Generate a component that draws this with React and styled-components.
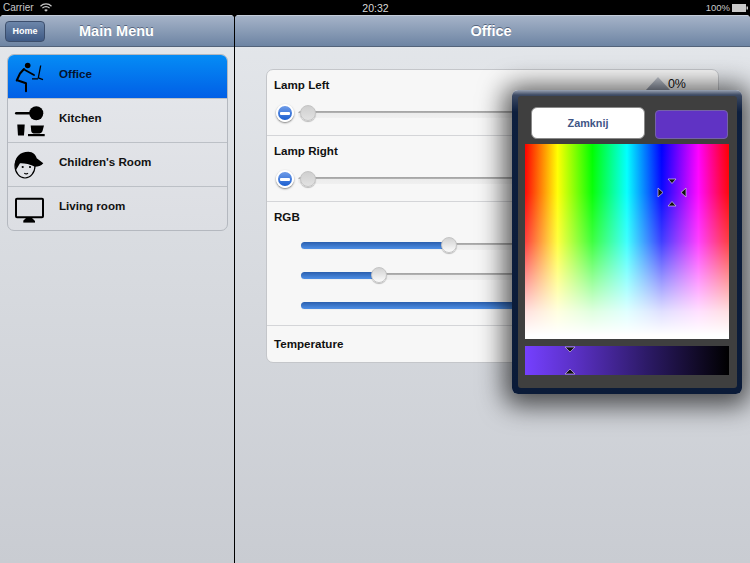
import styled, { createGlobalStyle } from "styled-components";

const Global = createGlobalStyle`
  html, body {
    margin: 0;
    padding: 0;
    background: #000;
  }
  * {
    box-sizing: border-box;
  }
`;

const Page = styled.div`
  width: 750px;
  height: 563px;
  position: relative;
  overflow: hidden;
  display: flex;
  flex-direction: column;
  background: #000;
  font-family: "Liberation Sans", Arial, sans-serif;
`;

const StatusBar = styled.div`
  height: 15px;
  flex: none;
  display: grid;
  grid-template-columns: 1fr auto 1fr;
  align-items: center;
  padding: 0 2px 0 3px;
  color: #c9c9c9;
  font-size: 10px;
`;

const StatusLeft = styled.div`
  display: flex;
  align-items: center;
  gap: 6px;
`;

const StatusRight = styled.div`
  display: flex;
  align-items: center;
  justify-content: flex-end;
  gap: 2px;
  font-size: 9.5px;
`;

const Clock = styled.div`
  color: #d8d8d8;
  font-size: 10.5px;
`;

const Split = styled.div`
  flex: 1;
  display: flex;
  gap: 1px;
  min-height: 0;
`;

const Side = styled.div`
  width: 234px;
  flex: none;
  display: flex;
  flex-direction: column;
  border-radius: 4px 4px 0 0;
  overflow: hidden;
  background: linear-gradient(to bottom, #e4e7eb, #c9ccd2);
`;

const Main = styled.div`
  flex: 1;
  display: flex;
  flex-direction: column;
  border-radius: 4px 4px 0 0;
  overflow: hidden;
  background: linear-gradient(to bottom, #e4e7eb, #c9ccd2);
`;

const NavBar = styled.div`
  height: 32px;
  flex: none;
  position: relative;
  display: flex;
  align-items: center;
  justify-content: ${(p) => (p.$center ? "center" : "flex-start")};
  padding-left: 5px;
  padding-right: ${(p) => (p.$center ? "8px" : "0")};
  background: linear-gradient(to bottom, #a5b3c8, #6d84a3);
  border-top: 1px solid #c3ccda;
  border-bottom: 1px solid #53637a;
`;

const NavTitle = styled.div`
  color: #fff;
  font-size: 14.5px;
  font-weight: bold;
  text-shadow: 0 -1px 0 rgba(60, 75, 100, 0.7);
`;

const SideTitle = styled(NavTitle)`
  margin-left: 34px;
`;

const HomeButton = styled.div`
  width: 40px;
  height: 21px;
  display: flex;
  align-items: center;
  justify-content: center;
  border-radius: 4px;
  border: 1px solid #3c4e6c;
  background: linear-gradient(to bottom, #6c86aa, #3f5a85);
  color: #fff;
  font-size: 9px;
  font-weight: bold;
`;

const Menu = styled.div`
  margin: 7px 6px 0 7px;
  border: 1px solid #b4b8bf;
  border-radius: 7px;
  overflow: hidden;
  background: linear-gradient(to bottom, #e6e8ec, #dcdee3);
`;

const MenuRow = styled.div`
  height: ${(p) => (p.$first ? "43px" : "44px")};
  display: flex;
  align-items: center;
  background: ${(p) =>
    p.$active ? "linear-gradient(to bottom, #058cf5, #015fe6)" : "transparent"};
  border-top: ${(p) => (p.$first ? "none" : "1px solid #bcc0c6")};
  padding-left: 6px;
`;

const MenuIcon = styled.svg`
  width: 32px;
  height: 36px;
  flex: none;
`;

const MenuLabel = styled.div`
  margin: -7px 0 0 13px;
  font-size: 11.6px;
  font-weight: bold;
  color: ${(p) => (p.$active ? "#04122e" : "#111")};
`;

const Content = styled.div`
  padding: 22px 31px 0;
`;

const Card = styled.div`
  border: 1px solid #c4c6ca;
  border-radius: 7px;
  background: #f7f7f7;
  overflow: hidden;
`;

const CardRow = styled.div`
  height: ${(p) => p.$height}px;
  padding: ${(p) => p.$top || 8}px 7px 0;
  position: relative;
  border-top: ${(p) => (p.$first ? "none" : "1px solid #d4d5d8")};
`;

const RowHead = styled.div`
  display: flex;
  justify-content: space-between;
  align-items: center;
`;

const RowLabel = styled.div`
  font-size: 11.6px;
  font-weight: bold;
  line-height: 13px;
  color: #111;
`;

const RowValue = styled.div`
  font-size: 12.5px;
  line-height: 13px;
  color: #111;
  margin-right: 25px;
`;

const LampLine = styled.div`
  margin-top: 13px;
  display: flex;
  align-items: center;
  gap: 4px;
  padding-left: 2px;
`;

const MinusButton = styled.div`
  width: 18px;
  height: 18px;
  flex: none;
  border-radius: 50%;
  display: flex;
  align-items: center;
  justify-content: center;
  border: 2px solid #fff;
  background: linear-gradient(to bottom, #6f9ce8, #1c5fd0);
  box-shadow: 0 1px 2px rgba(0, 0, 0, 0.5);
  &::after {
    content: "";
    width: 10px;
    height: 3px;
    background: #fff;
    border-radius: 1px;
  }
`;

const Slider = styled.div`
  position: relative;
  height: 16px;
  flex: 1;
  display: flex;
  align-items: center;
`;

const RgbSlider = styled(Slider)`
  flex: none;
`;

const Track = styled.div`
  flex: 1;
  height: 7px;
  margin-top: 2px;
  border-radius: 3px;
  background: linear-gradient(to bottom, #a2a2a2 0, #b4b4b4 28%, #ececec 32%, #f0f0f0 100%);
`;

const Fill = styled.div`
  position: absolute;
  left: 0;
  top: 5px;
  height: 7px;
  border-radius: 4px;
  background: linear-gradient(to bottom, #2a5fae, #4e8fe6);
`;

const Thumb = styled.div`
  position: absolute;
  top: 0;
  width: 16px;
  height: 16px;
  margin-left: -8px;
  border-radius: 50%;
  border: 1px solid #c4c4c4;
  background: ${(p) =>
    p.$off
      ? "linear-gradient(to bottom, #cfcfcf, #e2e2e2)"
      : "linear-gradient(to bottom, #d2d2d2, #fbfbfb)"};
  box-shadow: 0 1px 1px rgba(0, 0, 0, 0.25);
`;

const RgbSliders = styled.div`
  margin-top: 14px;
  padding-left: 27px;
  display: flex;
  flex-direction: column;
  gap: 14px;
`;

const Arrow = styled.div`
  position: absolute;
  left: 645px;
  top: 77px;
  width: 26px;
  height: 14px;
  clip-path: polygon(50% 0, 100% 100%, 0 100%);
  background: linear-gradient(to bottom, #c6cad2, #8e96a6);
`;

const Popover = styled.div`
  position: absolute;
  left: 512px;
  top: 90px;
  width: 230px;
  height: 304px;
  padding: 6px 5px 5px 6px;
  border-radius: 6px;
  background: linear-gradient(to bottom, #9aa3b3 0, #3d4a63 5px, #0d1f3e 22px, #0b1b38 100%);
  box-shadow: 0 4px 26px 8px rgba(0, 0, 0, 0.65);
`;

const PopoverInner = styled.div`
  height: 292px;
  border-radius: 3px;
  background: #3f3f3f;
  padding: 11px 8px 0 7px;
  display: flex;
  flex-direction: column;
`;

const PickerTop = styled.div`
  display: flex;
  align-items: flex-end;
  justify-content: space-between;
  height: 32px;
  padding: 0 1px 0 6px;
`;

const CloseButton = styled.div`
  width: 114px;
  height: 32px;
  display: flex;
  align-items: center;
  justify-content: center;
  border-radius: 6px;
  background: #fff;
  border: 1px solid #8a8a8a;
  color: #3f5585;
  font-size: 10.8px;
  font-weight: bold;
`;

const Swatch = styled.div`
  width: 73px;
  height: 29px;
  border-radius: 4px;
  background: #6033c4;
  border: 1px solid #7562a8;
`;

const Spectrum = styled.div`
  position: relative;
  margin-top: 5px;
  height: 195px;
  background: linear-gradient(
      to bottom,
      rgba(255, 255, 255, 0) 0%,
      rgba(255, 255, 255, 0.04) 25%,
      rgba(255, 255, 255, 0.25) 50%,
      rgba(255, 255, 255, 0.6) 70%,
      rgba(255, 255, 255, 0.88) 86%,
      rgba(255, 255, 255, 1) 98%
    ),
    linear-gradient(
      to right,
      #f00 0%,
      #ff0 16%,
      #0f0 33%,
      #0ff 50%,
      #00f 67%,
      #f0f 85%,
      #f00 100%
    );
`;

const Shade = styled.div`
  position: relative;
  margin-top: 7px;
  height: 29px;
  background: linear-gradient(to right, #7540ff 0%, #5a30c4 25%, #2c1a66 60%, #000 100%);
`;

const Marker = styled.svg`
  position: absolute;
  overflow: visible;
`;

const CrossMarker = styled(Marker)`
  left: 133px;
  top: 35px;
  width: 28px;
  height: 27px;
`;

const ShadeMarker = styled(Marker)`
  left: 38px;
  top: 0;
  width: 14px;
  height: 29px;
`;

function Wifi() {
  return (
    <svg width="12" height="9" viewBox="0 0 12 9">
      <path d="M0.5 3.2C3.6 0.2 8.4 0.2 11.5 3.2" fill="none" stroke="#c9c9c9" strokeWidth="1.3" />
      <path d="M2.4 5.1C4.4 3.2 7.6 3.2 9.6 5.1" fill="none" stroke="#c9c9c9" strokeWidth="1.3" />
      <path d="M4.2 6.9C5.2 6 6.8 6 7.8 6.9L6 8.8Z" fill="#c9c9c9" />
    </svg>
  );
}

function Battery() {
  return (
    <svg width="16" height="8" viewBox="0 0 16 8">
      <rect x="0.5" y="0.5" width="13" height="7" fill="#c9c9c9" stroke="#c9c9c9" />
      <rect x="14.5" y="2.5" width="1.5" height="3" fill="#c9c9c9" />
    </svg>
  );
}

function OfficeIcon() {
  return (
    <MenuIcon viewBox="0 0 32 36">
      <circle cx="13.7" cy="6.5" r="2.8" fill="#000" />
      <path d="M10 10L6 14.5L2.7 21.5" fill="none" stroke="#000" strokeWidth="2" strokeLinecap="round" strokeLinejoin="round" />
      <path d="M11 11L20 16" fill="none" stroke="#000" strokeWidth="1.8" strokeLinecap="round" />
      <path d="M4 21.5L12 24.2L12 32.2" fill="none" stroke="#000" strokeWidth="2" strokeLinecap="round" strokeLinejoin="round" />
      <path d="M26.7 6.5L24.3 18.8L29 20.6" fill="none" stroke="#000" strokeWidth="1.3" strokeLinejoin="round" />
      <path d="M18 19.8H24" stroke="#000" strokeWidth="1.2" />
    </MenuIcon>
  );
}

function KitchenIcon() {
  return (
    <MenuIcon viewBox="0 0 32 36">
      <circle cx="22.3" cy="10.2" r="7" fill="#000" />
      <rect x="1" y="9" width="16" height="2.4" rx="1.2" fill="#000" />
      <path d="M3.3 21.5H10.7L10 32.5H4Z" fill="#000" />
      <path d="M16.7 22.5H30L28.5 28C28 30 26 30.5 24 30.5H21C19 30.5 17.5 30 17.2 28Z" fill="#000" />
      <rect x="14" y="31" width="16.7" height="2.2" fill="#000" />
    </MenuIcon>
  );
}

function ChildIcon() {
  return (
    <MenuIcon viewBox="0 0 32 36">
      <ellipse cx="11" cy="19" rx="10" ry="12" fill="none" stroke="#000" strokeWidth="1.2" />
      <path d="M1 18C1 10 6 4.7 14.3 4.7C19 4.7 22 8 22.7 11.3L29.3 16.3C27 19 24 19.7 21 19.7C16 17 9 16 6 16.3L2 23Z" fill="#000" />
      <circle cx="8.7" cy="20" r="1.1" fill="#000" />
      <circle cx="16" cy="20" r="1.1" fill="#000" />
      <path d="M10.3 26.2C11.5 27 13 27 14 26.2" fill="none" stroke="#000" strokeWidth="1.2" />
    </MenuIcon>
  );
}

function TvIcon() {
  return (
    <MenuIcon viewBox="0 0 32 36">
      <rect x="2" y="7.7" width="27" height="18.6" rx="1" fill="none" stroke="#000" strokeWidth="2" />
      <path d="M12 27H18L21 30H9Z" fill="#000" />
      <rect x="9.3" y="30" width="11.7" height="1.6" fill="#000" />
    </MenuIcon>
  );
}

const menuItems = [
  { label: "Office", Icon: OfficeIcon, active: true },
  { label: "Kitchen", Icon: KitchenIcon },
  { label: "Children's Room", Icon: ChildIcon },
  { label: "Living room", Icon: TvIcon },
];

function App() {
  return (
    <Page>
      <Global />
      <StatusBar>
        <StatusLeft>
          Carrier
          <Wifi />
        </StatusLeft>
        <Clock>20:32</Clock>
        <StatusRight>
          100%
          <Battery />
        </StatusRight>
      </StatusBar>
      <Split>
        <Side>
          <NavBar>
            <HomeButton>Home</HomeButton>
            <SideTitle>Main Menu</SideTitle>
          </NavBar>
          <Menu>
            {menuItems.map(({ label, Icon, active }, i) => (
              <MenuRow key={label} $active={active} $first={i === 0}>
                <Icon />
                <MenuLabel $active={active}>{label}</MenuLabel>
              </MenuRow>
            ))}
          </Menu>
        </Side>
        <Main>
          <NavBar $center>
            <NavTitle>Office</NavTitle>
          </NavBar>
          <Content>
            <Card>
              <CardRow $first $height={65}>
                <RowHead>
                  <RowLabel>Lamp Left</RowLabel>
                  <RowValue>0%</RowValue>
                </RowHead>
                <LampLine>
                  <MinusButton />
                  <Slider>
                    <Track />
                    <Thumb $off style={{ left: "10px" }} />
                  </Slider>
                </LampLine>
              </CardRow>
              <CardRow $height={66}>
                <RowHead>
                  <RowLabel>Lamp Right</RowLabel>
                </RowHead>
                <LampLine>
                  <MinusButton />
                  <Slider>
                    <Track />
                    <Thumb $off style={{ left: "10px" }} />
                  </Slider>
                </LampLine>
              </CardRow>
              <CardRow $height={124}>
                <RowHead>
                  <RowLabel>RGB</RowLabel>
                </RowHead>
                <RgbSliders>
                  {[148, 78, 400].map((x, i) => (
                    <RgbSlider key={i}>
                      <Track />
                      <Fill style={{ width: `${x}px` }} />
                      <Thumb style={{ left: `${x}px` }} />
                    </RgbSlider>
                  ))}
                </RgbSliders>
              </CardRow>
              <CardRow $height={37} $top={11}>
                <RowHead>
                  <RowLabel>Temperature</RowLabel>
                </RowHead>
              </CardRow>
            </Card>
          </Content>
        </Main>
      </Split>
      <Arrow />
      <Popover>
        <PopoverInner>
          <PickerTop>
            <CloseButton>Zamknij</CloseButton>
            <Swatch />
          </PickerTop>
          <Spectrum>
            <CrossMarker viewBox="0 0 28 27">
              <path d="M10 0H18L14 4.5Z" fill="#111" stroke="#d8c8ee" strokeWidth="0.7" />
              <path d="M10 27H18L14 22.5Z" fill="#111" stroke="#d8c8ee" strokeWidth="0.7" />
              <path d="M0 9V18L5 13.5Z" fill="#111" stroke="#d8c8ee" strokeWidth="0.7" />
              <path d="M28 9V18L23 13.5Z" fill="#111" stroke="#d8c8ee" strokeWidth="0.7" />
            </CrossMarker>
          </Spectrum>
          <Shade>
            <ShadeMarker viewBox="0 0 14 29">
              <path d="M2 1H12L7 6Z" fill="#111" stroke="#c8b8e6" strokeWidth="0.7" />
              <path d="M2 28H12L7 23Z" fill="#111" stroke="#c8b8e6" strokeWidth="0.7" />
            </ShadeMarker>
          </Shade>
        </PopoverInner>
      </Popover>
    </Page>
  );
}

export default App;
